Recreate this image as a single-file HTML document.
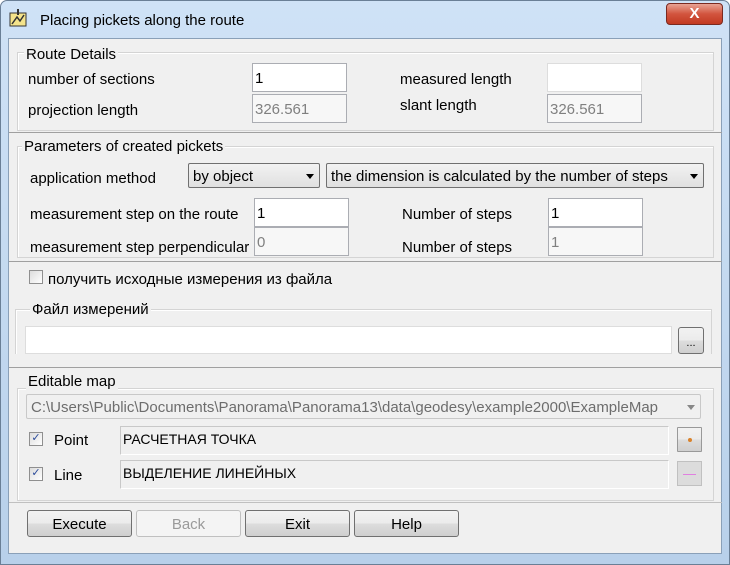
<!DOCTYPE html>
<html><head><meta charset="utf-8"><style>
*{box-sizing:border-box;margin:0;padding:0}
body{width:730px;height:565px;overflow:hidden;background:#fff;font-family:"Liberation Sans",sans-serif;font-size:15px;color:#000;position:relative}
.a{position:absolute;white-space:nowrap}
.win{left:0;top:0;width:730px;height:565px;background:linear-gradient(#cfe2f6,#b8d0ea);border:1px solid #6a7f96;border-radius:7px 7px 0 0}
.client{left:8px;top:38px;width:714px;height:516px;background:#f0f0f0;border:1px solid #8aa0b8}
.grp{border:1px solid #d4d4d4;box-shadow:inset 1px 1px 0 #fff}
.in{background:#fff;border:1px solid #abadb3;height:29px;padding:6px 2px 0;color:#000}
.dis{color:#808080;background:#f7f7f7}
.btn{border:1px solid #707070;border-radius:3px;background:linear-gradient(#f2f2f2,#ebebeb 50%,#dddddd 50%,#cfcfcf);text-align:center;height:27px;line-height:27px}
.cb{width:14px;height:14px;border:1px solid #8f8f8f;background:linear-gradient(135deg,#dcdcdc,#fff)}
.combo{border:1px solid #707070;border-radius:2px;background:linear-gradient(#f2f2f2,#e0e0e0);height:25px;line-height:25px;padding-left:4px;overflow:hidden}
.arr{position:absolute;right:5px;top:10px;width:0;height:0;border-left:4px solid transparent;border-right:4px solid transparent;border-top:5px solid #000}
.l{margin-top:2px}
</style></head><body>
<div class="a win"></div>
<svg class="a" style="left:9px;top:8px" width="20" height="20"><rect x="1" y="5" width="16" height="13" fill="#f4e38a" stroke="#333"/><path d="M3 16 L8 9 L11 13 L15 7" stroke="#333" fill="none" stroke-width="1.5"/><path d="M9 1 v6" stroke="#333" stroke-width="2"/></svg>
<div class="a" style="left:40px;top:12px;font-size:15px">Placing pickets along the route</div>
<div class="a" style="left:666px;top:3px;width:57px;height:22px;border-radius:4px;border:1px solid #7a2a20;background:linear-gradient(#e8a394,#d2543e 50%,#c23a22);color:#fff;text-align:center;font-weight:bold;line-height:20px;font-size:15px">X</div>
<div class="a client"></div>

<div class="a grp" style="left:17px;top:52px;width:697px;height:79px"></div>
<div class="a" style="left:24px;top:46px;background:#f0f0f0;padding:0 2px">Route Details</div>
<div class="a" style="left:28px;top:71px">number of sections</div>
<div class="a in" style="left:252px;top:63px;width:95px">1</div>
<div class="a" style="left:400px;top:71px">measured length</div>
<div class="a in" style="left:547px;top:63px;width:95px;border-color:#ddd"></div>
<div class="a" style="left:28px;top:102px">projection length</div>
<div class="a in dis" style="left:252px;top:94px;width:95px">326.561</div>
<div class="a" style="left:400px;top:97px">slant length</div>
<div class="a in dis" style="left:547px;top:94px;width:95px">326.561</div>

<div class="a" style="left:9px;top:132px;width:713px;border-top:1px solid #a0a0a0"></div>
<div class="a grp" style="left:17px;top:146px;width:697px;height:112px"></div>
<div class="a" style="left:22px;top:138px;background:#f0f0f0;padding:0 2px">Parameters of created pickets</div>
<div class="a" style="left:30px;top:170px">application method</div>
<div class="a combo" style="left:188px;top:163px;width:132px">by object<span class="arr"></span></div>
<div class="a combo" style="left:326px;top:163px;width:378px;padding-right:20px">the dimension is calculated by the number of steps<span class="arr" style="background:#e5e5e5;border-top-color:#000"></span></div>
<div class="a" style="left:30px;top:206px;width:224px;overflow:hidden">measurement step on the route</div>
<div class="a in" style="left:254px;top:198px;width:95px">1</div>
<div class="a" style="left:402px;top:206px">Number of steps</div>
<div class="a in" style="left:548px;top:198px;width:95px">1</div>
<div class="a" style="left:30px;top:239px;width:224px;overflow:hidden">measurement step perpendicular</div>
<div class="a in dis" style="left:254px;top:227px;width:95px">0</div>
<div class="a" style="left:402px;top:239px">Number of steps</div>
<div class="a in dis" style="left:548px;top:227px;width:95px">1</div>

<div class="a" style="left:9px;top:261px;width:713px;border-top:1px solid #a0a0a0"></div>
<div class="a cb" style="left:29px;top:270px"></div>
<div class="a" style="left:48px;top:271px">получить исходные измерения из файла</div>
<div class="a grp" style="left:15px;top:309px;width:697px;height:45px;border-bottom:none"></div>
<div class="a" style="left:30px;top:301px;background:#f0f0f0;padding:0 2px">Файл измерений</div>
<div class="a in" style="left:25px;top:326px;width:647px;border-color:#ddd;height:28px"></div>
<div class="a btn" style="left:678px;top:327px;width:26px;height:27px;line-height:30px;font-size:11px">...</div>
<div class="a" style="left:9px;top:367px;width:713px;border-top:1px solid #a0a0a0"></div>

<div class="a grp" style="left:17px;top:388px;width:697px;height:113px"></div>
<div class="a" style="left:26px;top:373px;background:#f0f0f0;padding:0 2px">Editable map</div>
<div class="a combo" style="left:26px;top:394px;width:675px;color:#6d6d6d;background:#f0f0f0;border-color:#c8c8c8;padding-right:22px">C:\Users\Public\Documents\Panorama\Panorama13\data\geodesy\example2000\ExampleMap<span class="arr" style="border-top-color:#888"></span></div>
<div class="a cb" style="left:29px;top:432px;font-size:11px;line-height:11px;color:#2a4a9a;text-align:center">✓</div>
<div class="a" style="left:54px;top:432px">Point</div>
<div class="a" style="left:120px;top:426px;width:549px;height:29px;border:1px solid #c8c8c8;border-right-color:#fff;border-bottom-color:#fff;padding-left:2px;line-height:24px;font-size:14px">РАСЧЕТНАЯ ТОЧКА</div>
<div class="a btn" style="left:677px;top:427px;width:25px;height:25px;border-radius:1px;border-color:#999"><span style="position:absolute;left:10px;top:10px;width:4px;height:4px;border-radius:50%;background:#d9822b"></span></div>
<div class="a cb" style="left:29px;top:467px;font-size:11px;line-height:11px;color:#2a4a9a;text-align:center">✓</div>
<div class="a" style="left:54px;top:467px">Line</div>
<div class="a" style="left:120px;top:460px;width:549px;height:29px;border:1px solid #c8c8c8;border-right-color:#fff;border-bottom-color:#fff;padding-left:2px;line-height:24px;font-size:14px">ВЫДЕЛЕНИЕ ЛИНЕЙНЫХ</div>
<div class="a" style="left:677px;top:461px;width:25px;height:25px;background:#dcdcdc;border:1px solid #c0c0c0"><span style="position:absolute;left:5px;top:12px;width:13px;height:1px;background:#e080e0"></span></div>

<div class="a" style="left:9px;top:502px;width:713px;border-top:1px solid #c0c0c0"></div>
<div class="a btn" style="left:27px;top:510px;width:105px">Execute</div>
<div class="a btn" style="left:136px;top:510px;width:105px;color:#9a9a9a;border-color:#c0c0c0;background:#f4f4f4">Back</div>
<div class="a btn" style="left:245px;top:510px;width:105px">Exit</div>
<div class="a btn" style="left:354px;top:510px;width:105px">Help</div>
</body></html>
